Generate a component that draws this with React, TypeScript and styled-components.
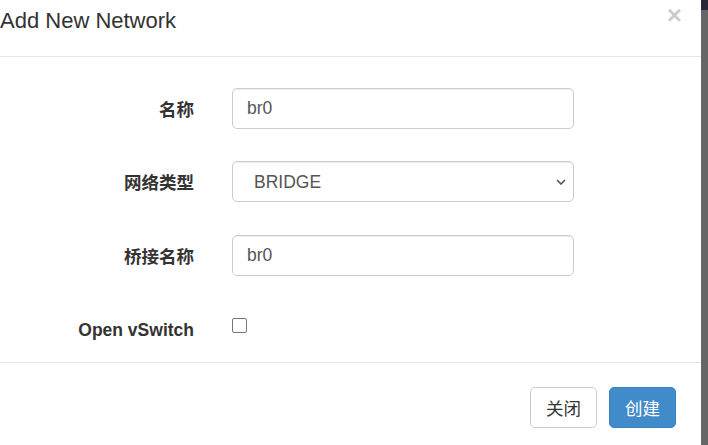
import styled, { createGlobalStyle } from 'styled-components';

const GlobalStyle = createGlobalStyle`
  html, body {
    margin: 0;
    padding: 0;
    background: #ffffff;
  }
  * {
    box-sizing: border-box;
  }
`;

const Page = styled.div`
  display: flex;
  width: 708px;
  height: 445px;
  overflow: hidden;
  font-family: 'Liberation Sans', 'Noto Sans CJK SC', sans-serif;
  color: #333333;
`;

const Modal = styled.section`
  width: 701px;
  flex: none;
  background: #ffffff;
  display: flex;
  flex-direction: column;
`;

const Backdrop = styled.div`
  flex: 1;
  background: #666666;
  display: flex;
  flex-direction: column;
`;

const NavStrip = styled.div`
  height: 10px;
  background: #29263a;
`;

const Header = styled.header`
  height: 57px;
  flex: none;
  display: flex;
  justify-content: space-between;
  align-items: flex-start;
  padding: 6px 19px 0 0;
  border-bottom: 1px solid #e5e5e5;
`;

const Title = styled.h4`
  margin: 0;
  font-size: 22px;
  line-height: 30px;
  font-weight: 400;
  color: #333333;
`;

const Close = styled.button`
  border: 0;
  padding: 0;
  margin-top: -4px;
  background: transparent;
  font-family: 'Liberation Sans', sans-serif;
  font-size: 26px;
  font-weight: 700;
  line-height: 1;
  color: #000000;
  opacity: 0.2;
  cursor: pointer;
`;

const Body = styled.div`
  padding: 31px 0 13px 0;
  display: grid;
  grid-template-columns: 194px 342px;
  grid-auto-rows: 41px;
  column-gap: 38px;
  row-gap: 32.33px;
`;

const Label = styled.label`
  text-align: right;
  padding-top: 2px;
  font-size: 17.5px;
  font-weight: 700;
  line-height: 40px;
  color: #333333;
  white-space: nowrap;
`;

const fieldBase = `
  width: 100%;
  height: 41px;
  border: 1px solid #cccccc;
  border-radius: 5px;
  background: #ffffff;
  box-shadow: inset 0 1px 1px rgba(0, 0, 0, 0.075);
  font-family: 'Liberation Sans', 'Noto Sans CJK SC', sans-serif;
  font-size: 17.5px;
  color: #555555;
  outline: none;
`;

const Input = styled.input`
  ${fieldBase}
  padding: 0 14px;
`;

const SelectWrap = styled.div`
  position: relative;
  height: 41px;
`;

const Select = styled.select`
  ${fieldBase}
  appearance: none;
  -webkit-appearance: none;
  padding: 0 30px 0 21px;
`;

const Chevron = styled.svg`
  position: absolute;
  right: 8px;
  top: 18px;
  pointer-events: none;
`;

const CheckCell = styled.div`
  display: flex;
  align-items: flex-start;
`;

const Checkbox = styled.span`
  width: 15px;
  height: 15px;
  margin-top: 10px;
  border: 1px solid #767676;
  border-radius: 2px;
  background: #ffffff;
`;

const Footer = styled.footer`
  border-top: 1px solid #e5e5e5;
  padding: 24px 25px 0 0;
  display: flex;
  justify-content: flex-end;
  gap: 12px;
`;

const Button = styled.button<{ $primary?: boolean }>`
  width: 67px;
  height: 41px;
  border-radius: 5px;
  border: 1px solid ${(p) => (p.$primary ? '#3b82c2' : '#cccccc')};
  background: ${(p) => (p.$primary ? '#428bca' : '#ffffff')};
  color: ${(p) => (p.$primary ? '#ffffff' : '#333333')};
  font-family: 'Noto Sans CJK SC', sans-serif;
  font-size: 17.5px;
  font-weight: 400;
  padding: 0;
  cursor: pointer;
`;

export default function App() {
  return (
    <>
      <GlobalStyle />
      <Page>
        <Modal>
          <Header>
            <Title>Add New Network</Title>
            <Close aria-label="Close">×</Close>
          </Header>
          <Body>
            <Label>名称</Label>
            <Input defaultValue="br0" />

            <Label>网络类型</Label>
            <SelectWrap>
              <Select defaultValue="BRIDGE">
                <option value="BRIDGE">BRIDGE</option>
                <option value="NAT">NAT</option>
              </Select>
              <Chevron width="10" height="6" viewBox="0 0 10 6">
                <polyline points="1,1 5,5 9,1" fill="none" stroke="#555" strokeWidth="1.6" />
              </Chevron>
            </SelectWrap>

            <Label>桥接名称</Label>
            <Input defaultValue="br0" />

            <Label>Open vSwitch</Label>
            <CheckCell>
              <Checkbox />
            </CheckCell>
          </Body>
          <Footer>
            <Button>关闭</Button>
            <Button $primary>创建</Button>
          </Footer>
        </Modal>
        <Backdrop>
          <NavStrip />
        </Backdrop>
      </Page>
    </>
  );
}
